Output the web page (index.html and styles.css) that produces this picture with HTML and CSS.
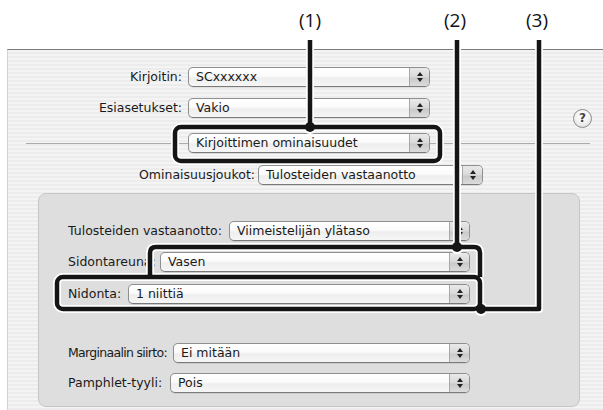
FILE: index.html
```html
<!DOCTYPE html>
<html lang="fi">
<head>
<meta charset="utf-8">
<title>Tulostus</title>
<link rel="stylesheet" href="styles.css">
</head>
<body>
<div class="page">
  <div class="top"></div>
  <div class="dialog">
    <div class="row r1">
      <span class="lbl lbl-main">Kirjoitin:</span>
      <div class="popup pw-main"><span class="val">SCxxxxxx</span><span class="step"></span></div>
    </div>
    <div class="row r2">
      <span class="lbl lbl-main">Esiasetukset:</span>
      <div class="popup pw-main"><span class="val">Vakio</span><span class="step"></span></div>
      <span class="help">?</span>
    </div>
    <div class="row r3">
      <div class="popup pw-main"><span class="val">Kirjoittimen ominaisuudet</span><span class="step"></span></div>
    </div>
    <div class="row r4">
      <span class="lbl lbl-set">Ominaisuusjoukot:</span>
      <div class="popup pw-set"><span class="val">Tulosteiden vastaanotto</span><span class="step"></span></div>
    </div>
    <div class="group">
      <div class="grow g1">
        <span class="lbl lbl-tul">Tulosteiden vastaanotto:</span>
        <div class="popup flex"><span class="val">Viimeistelijän ylätaso</span><span class="step"></span></div>
      </div>
      <div class="grow g2">
        <span class="lbl lbl-sid">Sidontareuna:</span>
        <div class="popup flex"><span class="val">Vasen</span><span class="step"></span></div>
      </div>
      <div class="grow g3">
        <span class="lbl lbl-nid">Nidonta:</span>
        <div class="popup flex"><span class="val">1 niittiä</span><span class="step"></span></div>
      </div>
      <div class="grow g4">
        <span class="lbl lbl-mar">Marginaalin siirto:</span>
        <div class="popup flex"><span class="val">Ei mitään</span><span class="step"></span></div>
      </div>
      <div class="grow g5">
        <span class="lbl lbl-pam">Pamphlet-tyyli:</span>
        <div class="popup flex"><span class="val">Pois</span><span class="step"></span></div>
      </div>
    </div>
  </div>

  <div class="callouts">
    <span class="num n1">(1)</span>
    <span class="num n2">(2)</span>
    <span class="num n3">(3)</span>
    <svg class="lines" width="603" height="410" viewBox="0 0 603 410">
      <g fill="none" stroke="#fff" stroke-width="8" stroke-linejoin="round">
        <path d="M310 40 V127"/>
        <rect x="175" y="127" width="265" height="34" rx="6"/>
        <path d="M457 40 V247"/>
        <path d="M150 277 V253 Q150 247 156 247 H474 Q480 247 480 253 V277"/>
        <rect x="57" y="277" width="423" height="32" rx="6"/>
        <path d="M480 309 H539 V40"/>
      </g>
      <g fill="#fff">
        <circle cx="310" cy="127" r="7"/>
        <circle cx="457" cy="247" r="7"/>
        <circle cx="481" cy="309" r="7"/>
      </g>
      <g fill="none" stroke="#151515" stroke-width="4.5" stroke-linejoin="round">
        <path d="M310 40 V127"/>
        <rect x="175" y="127" width="265" height="34" rx="6"/>
        <path d="M457 40 V247"/>
        <path d="M150 277 V253 Q150 247 156 247 H474 Q480 247 480 253 V277"/>
        <rect x="57" y="277" width="423" height="32" rx="6"/>
        <path d="M480 309 H539 V40"/>
      </g>
      <g fill="#151515">
        <circle cx="310" cy="127" r="5"/>
        <circle cx="457" cy="247" r="5"/>
        <circle cx="481" cy="309" r="5"/>
      </g>
    </svg>
  </div>
</div>
</body>
</html>
```
FILE: styles.css
```css
* { box-sizing: border-box; }
html, body { margin: 0; padding: 0; background: #fff; }
body {
  font-family: "DejaVu Sans", Verdana, sans-serif;
  font-size: 12.5px;
  color: #1a1a1a;
}
.page {
  position: relative;
  width: 603px;
  height: 410px;
  overflow: hidden;
}
.top { height: 49px; }
.dialog {
  margin-left: 7px;
  height: 361px;
  border-top: 1px solid #7a7a7a;
  border-left: 1px solid #d2d2d2;
  background: repeating-linear-gradient(#f4f4f4 0 2px, #ececec 2px 4px);
  display: flex;
  flex-direction: column;
}
.row {
  display: flex;
  align-items: center;
  height: 20px;
  flex: none;
}
.r1 { margin-top: 17px; gap: 6px; }
.r2 { margin-top: 11px; gap: 6px; align-items: flex-start; padding-right: 11px; }
.r2 .lbl, .r2 .popup { align-self: center; }
.r3 {
  margin: 15px 13px 0 18px;
  padding-left: 162px;
  background: linear-gradient(#ababab, #ababab) no-repeat 0 10px / 100% 1px;
}
.r4 { margin-top: 12px; gap: 3px; }
.lbl { white-space: nowrap; line-height: 20px; }
.lbl-main { width: 174px; text-align: right; }
.lbl-set { width: 247px; text-align: right; }

.popup {
  display: flex;
  height: 20px;
  border: 1px solid #8f8f8f;
  border-bottom-color: #7a7a7a;
  border-radius: 5px;
  background: linear-gradient(#ffffff 0%, #fbfbfb 45%, #eeeeee 55%, #f6f6f6 100%);
  box-shadow: 0 1px 0 rgba(0,0,0,0.08);
  overflow: hidden;
}
.pw-main { width: 242px; }
.pw-set { width: 225px; }
.popup.flex { flex: 1; min-width: 0; }
.val {
  flex: 1;
  padding-left: 7px;
  line-height: 18px;
  white-space: nowrap;
  overflow: hidden;
}
.step {
  width: 20px;
  flex: none;
  border-left: 1px solid #a8a8a8;
  background: linear-gradient(#e9e9e9 0%, #d9d9d9 50%, #c9c9c9 55%, #dcdcdc 100%);
  display: flex;
  flex-direction: column;
  align-items: center;
  justify-content: center;
  gap: 2px;
}
.step::before, .step::after {
  content: "";
  width: 0;
  height: 0;
  border-left: 3px solid transparent;
  border-right: 3px solid transparent;
}
.step::before { border-bottom: 4px solid #222; }
.step::after { border-top: 4px solid #222; }

.help {
  margin-left: auto;
  margin-top: 11px;
  width: 19px;
  height: 19px;
  flex: none;
  border: 1px solid #8c8c8c;
  border-radius: 50%;
  background: radial-gradient(circle at 50% 35%, #ffffff 0%, #f2f2f2 50%, #d6d6d6 100%);
  color: #444;
  font-size: 12px;
  font-weight: bold;
  line-height: 17px;
  text-align: center;
}

.group {
  margin: 8px 0 0 30px;
  width: 542px;
  height: 214px;
  flex: none;
  border: 1px solid #c6c6c6;
  border-radius: 8px;
  background: #dedede;
  display: flex;
  flex-direction: column;
  padding-left: 29px;
}
.grow {
  display: flex;
  align-items: center;
  width: 402px;
  height: 20px;
  gap: 3px;
  flex: none;
}
.g1 { margin-top: 27px; }
.g2 { margin-top: 11px; }
.g3 { margin-top: 12px; }
.g4 { margin-top: 39px; }
.g5 { margin-top: 10px; }
.lbl-tul { width: 158px; }
.lbl-sid { width: 89px; }
.lbl-nid { width: 57px; }
.lbl-mar { width: 102px; letter-spacing: -0.7px; }
.lbl-pam { width: 99px; }

.callouts {
  position: absolute;
  left: 0;
  top: 0;
  width: 603px;
  height: 410px;
  pointer-events: none;
}
.lines { position: absolute; left: 0; top: 0; }
.num {
  position: absolute;
  top: 7px;
  width: 40px;
  margin-left: -20px;
  text-align: center;
  font-family: "Open Sans", "DejaVu Sans", sans-serif;
  font-size: 19px;
  line-height: 26px;
  color: #111;
}
.n1 { left: 310px; }
.n2 { left: 455px; }
.n3 { left: 537px; }
```
